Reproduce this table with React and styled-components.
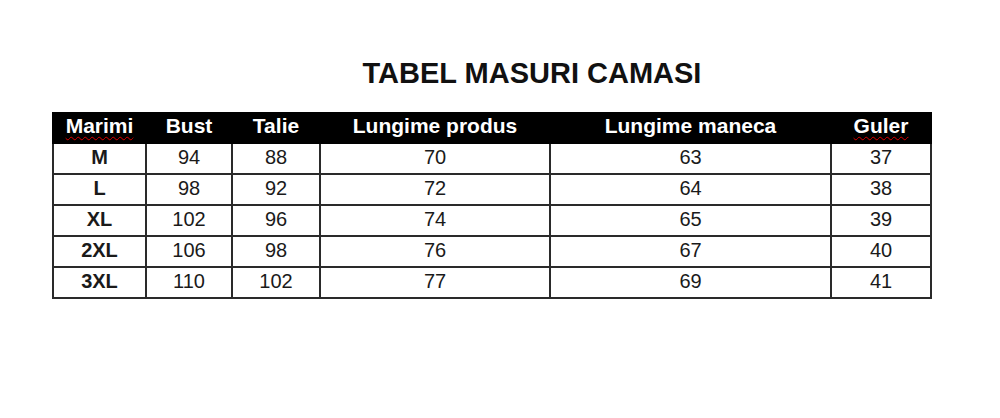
import React from "react";
import styled, { createGlobalStyle } from "styled-components";

const GlobalStyle = createGlobalStyle`
  html, body {
    margin: 0;
    padding: 0;
    background: #fff;
    font-family: "Liberation Sans", Arial, sans-serif;
  }
`;

const Page = styled.div`
  width: 1000px;
  height: 418px;
  background: #fff;
  padding-top: 57px;
  box-sizing: border-box;
`;

const Title = styled.h1`
  margin: 0;
  padding-left: 64px;
  text-align: center;
  font-size: 29px;
  line-height: 32px;
  font-weight: bold;
  color: #111;
`;

const Table = styled.table`
  margin: 23px 0 0 52px;
  width: 878px;
  border-collapse: collapse;
  table-layout: fixed;
`;

const HeadCell = styled.th`
  background: #000;
  color: #fff;
  height: 28px;
  padding: 0;
  line-height: 24px;
  vertical-align: top;
  font-size: 21px;
  font-weight: bold;
  text-align: center;
  border: 2px solid #000;
`;

const Spell = styled.span`
  text-decoration: underline wavy #d00;
  text-decoration-thickness: 1px;
  text-underline-offset: 3px;
`;

const Cell = styled.td`
  height: 29px;
  padding: 0;
  line-height: 26px;
  vertical-align: top;
  font-size: 20px;
  text-align: center;
  color: #1a1a1a;
  font-weight: ${(p) => (p.$bold ? "bold" : "normal")};
  border: 2px solid #2a2a2a;
`;

const widths = [93, 86, 88, 230, 281, 100];

const rows = [
  ["M", 94, 88, 70, 63, 37],
  ["L", 98, 92, 72, 64, 38],
  ["XL", 102, 96, 74, 65, 39],
  ["2XL", 106, 98, 76, 67, 40],
  ["3XL", 110, 102, 77, 69, 41],
];

export default function App() {
  return (
    <Page>
      <GlobalStyle />
      <Title>TABEL MASURI CAMASI</Title>
      <Table>
        <colgroup>
          {widths.map((w, i) => (
            <col key={i} style={{ width: w }} />
          ))}
        </colgroup>
        <thead>
          <tr>
            <HeadCell>
              <Spell>Marimi</Spell>
            </HeadCell>
            <HeadCell>Bust</HeadCell>
            <HeadCell>Talie</HeadCell>
            <HeadCell>Lungime produs</HeadCell>
            <HeadCell>Lungime maneca</HeadCell>
            <HeadCell>
              <Spell>Guler</Spell>
            </HeadCell>
          </tr>
        </thead>
        <tbody>
          {rows.map((r) => (
            <tr key={r[0]}>
              {r.map((v, i) => (
                <Cell key={i} $bold={i === 0}>
                  {v}
                </Cell>
              ))}
            </tr>
          ))}
        </tbody>
      </Table>
    </Page>
  );
}
